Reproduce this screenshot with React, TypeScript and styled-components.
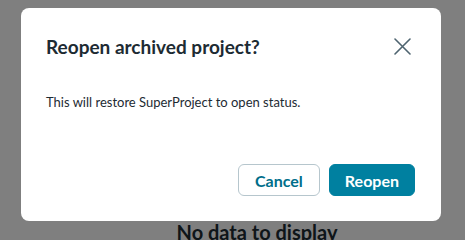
import React from 'react';
import styled, { createGlobalStyle } from 'styled-components';

const GlobalStyle = createGlobalStyle`
  html, body {
    margin: 0;
    padding: 0;
    background: #ffffff;
    font-family: Lato, "Open Sans", sans-serif;
  }
`;

const Page = styled.div`
  width: 465px;
  height: 240px;
  display: flex;
  flex-direction: column;
  align-items: center;
  overflow: hidden;
`;

const EmptyState = styled.div`
  margin-top: 220px;
  padding-left: 49px;
  font-size: 20px;
  font-weight: 700;
  color: #1d2b33;
`;

const Overlay = styled.div`
  position: fixed;
  inset: 0;
  background: rgba(0, 0, 0, 0.5);
  display: flex;
  justify-content: center;
  align-items: flex-start;
  padding: 8px 3px 0 0;
`;

const Dialog = styled.div`
  width: 420px;
  height: 213px;
  box-sizing: border-box;
  background: #ffffff;
  border-radius: 8px;
  padding: 24px 26px 24px 25px;
  display: flex;
  flex-direction: column;
`;

const Header = styled.div`
  display: flex;
  justify-content: space-between;
  align-items: center;
  height: 28px;
`;

const Title = styled.h2`
  margin: 0;
  font-size: 19px;
  font-weight: 700;
  color: #1d2b33;
`;

const CloseButton = styled.button`
  border: none;
  background: none;
  padding: 0;
  margin-right: 3px;
  width: 20px;
  height: 20px;
  display: flex;
  align-items: center;
  justify-content: center;
  cursor: pointer;
`;

const Body = styled.p`
  margin: 34px 0 0;
  font-size: 13px;
  color: #1d2b33;
  flex: 1;
`;

const Footer = styled.div`
  display: flex;
  justify-content: flex-end;
  gap: 9px;
  margin-bottom: 1px;
`;

const Button = styled.button<{ $primary?: boolean }>`
  height: 32px;
  box-sizing: border-box;
  padding: 0 ${(p) => (p.$primary ? 15 : 16)}px;
  border-radius: 6px;
  font-family: Lato, sans-serif;
  font-size: 16px;
  font-weight: 700;
  cursor: pointer;
  border: 1px solid ${(p) => (p.$primary ? '#0080a0' : '#b6c6cd')};
  background: ${(p) => (p.$primary ? '#0080a0' : '#ffffff')};
  color: ${(p) => (p.$primary ? '#ffffff' : '#006e8a')};
`;

const App: React.FC = () => {
  return (
    <>
      <GlobalStyle />
      <Page>
        <EmptyState>No data to display</EmptyState>
      </Page>
      <Overlay>
        <Dialog>
          <Header>
            <Title>Reopen archived project?</Title>
            <CloseButton aria-label="Close">
              <svg width="17" height="17" viewBox="0 0 17 17">
                <path d="M1 1 L16 16 M16 1 L1 16" stroke="#4e6470" strokeWidth="1.6" strokeLinecap="round" />
              </svg>
            </CloseButton>
          </Header>
          <Body>This will restore SuperProject to open status.</Body>
          <Footer>
            <Button>Cancel</Button>
            <Button $primary>Reopen</Button>
          </Footer>
        </Dialog>
      </Overlay>
    </>
  );
};

export default App;
